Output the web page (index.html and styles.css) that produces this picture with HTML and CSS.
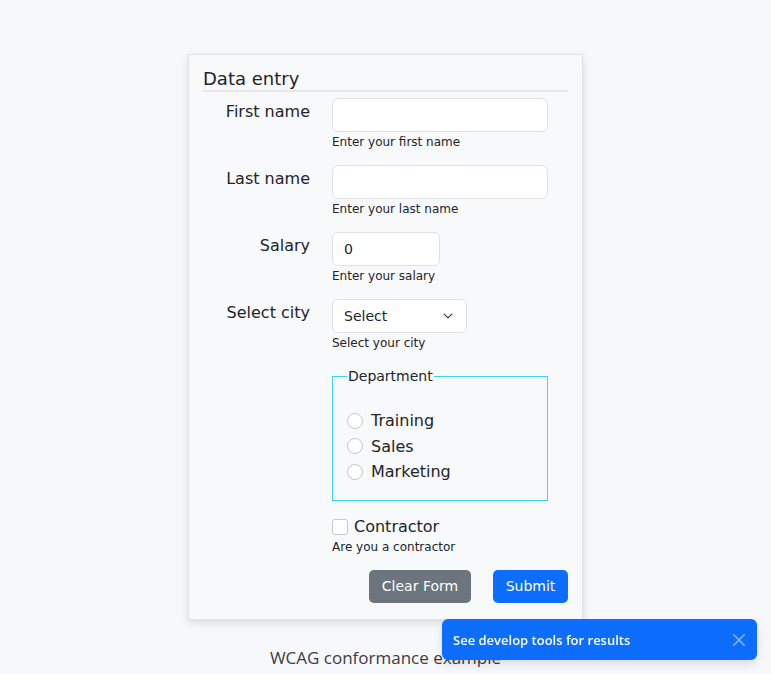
FILE: index.html
```html
<!DOCTYPE html>
<html lang="en">
<head>
<meta charset="utf-8">
<title>WCAG conformance example</title>
<link rel="stylesheet" href="styles.css">
</head>
<body>
<main class="page">
  <form class="card">
    <h1 class="card-title">Data entry</h1>

    <div class="row">
      <label class="label" for="first">First name</label>
      <div class="field">
        <input class="input w-full" id="first" type="text">
        <div class="hint">Enter your first name</div>
      </div>
    </div>

    <div class="row">
      <label class="label" for="last">Last name</label>
      <div class="field">
        <input class="input w-full" id="last" type="text">
        <div class="hint">Enter your last name</div>
      </div>
    </div>

    <div class="row">
      <label class="label" for="salary">Salary</label>
      <div class="field">
        <input class="input w-salary" id="salary" type="text" value="0">
        <div class="hint">Enter your salary</div>
      </div>
    </div>

    <div class="row">
      <label class="label" for="city">Select city</label>
      <div class="field">
        <div class="select-wrap">
          <select class="input select" id="city"><option>Select</option></select>
          <svg class="chevron" viewBox="0 0 16 16" width="12" height="12"><path d="M3 5.5l5 5 5-5" fill="none" stroke="#343a40" stroke-width="1.6" stroke-linecap="round" stroke-linejoin="round"/></svg>
        </div>
        <div class="hint">Select your city</div>
      </div>
    </div>

    <div class="row">
      <div class="label"></div>
      <fieldset class="dept">
        <legend class="dept-legend">Department</legend>
        <label class="radio"><span class="radio-dot"></span>Training</label>
        <label class="radio"><span class="radio-dot"></span>Sales</label>
        <label class="radio"><span class="radio-dot"></span>Marketing</label>
      </fieldset>
    </div>

    <div class="row">
      <div class="label"></div>
      <div class="field">
        <label class="check"><span class="check-box"></span>Contractor</label>
        <div class="hint">Are you a contractor</div>
      </div>
    </div>

    <div class="actions">
      <button type="button" class="btn btn-secondary">Clear Form</button>
      <button type="button" class="btn btn-primary">Submit</button>
    </div>
  </form>

  <p class="footer">WCAG conformance example</p>
</main>

<div class="toast">
  <span class="toast-text">See develop tools for results</span>
  <svg class="toast-close" viewBox="0 0 16 16" width="14" height="14"><path d="M2 2l12 12M14 2L2 14" stroke="#ffffff" stroke-width="1.6" stroke-linecap="round"/></svg>
</div>
</body>
</html>
```

FILE: styles.css
```css
* { box-sizing: border-box; }

html, body {
  margin: 0;
  padding: 0;
  background: #f7f8fc;
  color: #212529;
  font-family: "DejaVu Sans", Verdana, sans-serif;
}

.page {
  display: flex;
  flex-direction: column;
  align-items: center;
  padding-top: 54px;
}

.card {
  width: 395px;
  background: #f8f9fa;
  border: 1px solid #e2e3e6;
  box-shadow: 0 3px 8px rgba(0, 0, 0, 0.12);
  padding: 14px 14px 16px 14px;
}

.card-title {
  margin: 0 0 6px 0;
  font-size: 18px;
  font-weight: normal;
  line-height: 20px;
  padding-bottom: 1px;
  border-bottom: 2px solid #e5e7ea;
  color: #212529;
}

.row {
  display: flex;
  gap: 22px;
  margin-bottom: 15px;
}

.label {
  width: 107px;
  flex: none;
  text-align: right;
  font-size: 16px;
  line-height: 24px;
  padding-top: 2px;
  color: #212529;
}

.field {
  display: flex;
  flex-direction: column;
}

.input {
  height: 34px;
  border: 1px solid #dee2e6;
  border-radius: 6px;
  background: #ffffff;
  font-family: "DejaVu Sans", Verdana, sans-serif;
  font-size: 14px;
  color: #212529;
  padding: 0 11px;
  outline: none;
}

.w-full { width: 216px; }
.w-salary { width: 108px; }

.select-wrap {
  position: relative;
  width: 135px;
  height: 34px;
}

.select {
  width: 135px;
  appearance: none;
  -webkit-appearance: none;
  padding-right: 30px;
}

.chevron {
  position: absolute;
  right: 13px;
  top: 11px;
}

.hint {
  margin-top: 3px;
  font-size: 12px;
  line-height: 15px;
  color: #212529;
}

.dept {
  width: 216px;
  margin: 2px 0 1px 0;
  padding: 23px 14px 15px 14px;
  border: 1px solid #3fd3f0;
  display: flex;
  flex-direction: column;
}

.dept-legend {
  font-size: 14px;
  line-height: 17px;
  padding: 0 1px;
  color: #212529;
}

.radio {
  display: flex;
  align-items: center;
  gap: 8px;
  font-size: 16px;
  line-height: 25.5px;
  color: #212529;
}

.radio-dot {
  width: 16px;
  height: 16px;
  border: 1px solid #c4c8cc;
  border-radius: 50%;
  background: #ffffff;
  flex: none;
}

.check {
  display: flex;
  align-items: center;
  gap: 6px;
  font-size: 16px;
  line-height: 20px;
  color: #212529;
}

.check-box {
  width: 16px;
  height: 16px;
  border: 1px solid #c4c8cc;
  border-radius: 3px;
  background: #ffffff;
  flex: none;
}

.actions {
  display: flex;
  justify-content: flex-end;
  gap: 22px;
  margin-top: 5px;
}

.btn {
  height: 33px;
  border: none;
  border-radius: 5px;
  color: #ffffff;
  font-family: "DejaVu Sans", Verdana, sans-serif;
  font-size: 14px;
  padding: 0;
  white-space: nowrap;
}

.btn-secondary { background: #6c757d; width: 102px; }
.btn-primary { background: #0d6efd; width: 75px; }

.footer {
  margin: 29px 0 0 0;
  font-family: "Open Sans", sans-serif;
  font-size: 17px;
  line-height: 18px;
  color: #3a3d42;
}

.toast {
  position: fixed;
  right: 14px;
  bottom: 14px;
  width: 315px;
  height: 41px;
  background: #0d6efd;
  border-radius: 6px;
  box-shadow: 0 4px 10px rgba(0, 0, 0, 0.12);
  display: flex;
  align-items: center;
  justify-content: space-between;
  padding: 0 11px 0 11px;
}

.toast-text {
  font-family: "Open Sans", sans-serif;
  font-weight: 600;
  font-size: 13px;
  color: #ffffff;
}

.toast-close {
  opacity: 0.55;
}
```
